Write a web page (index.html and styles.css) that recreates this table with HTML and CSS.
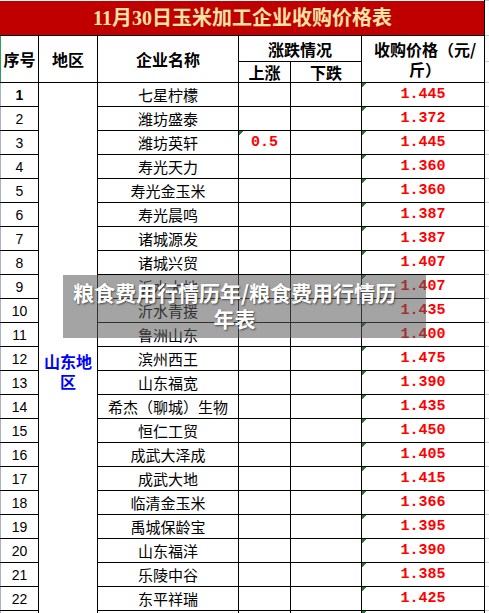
FILE: index.html
```html
<!DOCTYPE html>
<html lang="zh-CN">
<head>
<meta charset="utf-8">
<title>11月30日玉米加工企业收购价格表</title>
<link rel="stylesheet" href="styles.css">
</head>
<body>
<table class="sheet">
  <colgroup>
    <col class="c-no"><col class="c-area"><col class="c-name"><col class="c-up"><col class="c-down"><col class="c-price"><col class="c-gut">
  </colgroup>
  <tr class="r-title">
    <td class="title" colspan="6">11月30日玉米加工企业收购价格表</td>
    <td class="gut"></td>
  </tr>
  <tr class="r-h1">
    <td class="hd first-h" rowspan="2">序号</td>
    <td class="hd" rowspan="2">地区</td>
    <td class="hd" rowspan="2">企业名称</td>
    <td class="hd" colspan="2">涨跌情况</td>
    <td class="hd price-h" rowspan="2">收购价格（元/斤）</td>
    <td class="gut"></td>
  </tr>
  <tr class="r-h2">
    <td class="hd">上涨</td>
    <td class="hd">下跌</td>
    <td class="gut"></td>
  </tr>
  <tr class="row"><td class="no bold">1</td><td class="area" rowspan="24">山东地区</td><td class="name">七星柠檬</td><td></td><td></td><td class="price tri">1.445</td><td class="gut"></td></tr>
  <tr class="row"><td class="no">2</td><td class="name">潍坊盛泰</td><td></td><td></td><td class="price tri">1.372</td><td class="gut"></td></tr>
  <tr class="row"><td class="no">3</td><td class="name">潍坊英轩</td><td class="chg tri">0.5</td><td></td><td class="price tri">1.445</td><td class="gut"></td></tr>
  <tr class="row"><td class="no">4</td><td class="name">寿光天力</td><td></td><td></td><td class="price tri">1.360</td><td class="gut"></td></tr>
  <tr class="row"><td class="no">5</td><td class="name">寿光金玉米</td><td></td><td></td><td class="price tri">1.360</td><td class="gut"></td></tr>
  <tr class="row"><td class="no">6</td><td class="name">寿光晨鸣</td><td></td><td></td><td class="price tri">1.387</td><td class="gut"></td></tr>
  <tr class="row"><td class="no">7</td><td class="name">诸城源发</td><td></td><td></td><td class="price tri">1.387</td><td class="gut"></td></tr>
  <tr class="row"><td class="no">8</td><td class="name">诸城兴贸</td><td></td><td></td><td class="price tri">1.407</td><td class="gut"></td></tr>
  <tr class="row"><td class="no">9</td><td class="name">沂水大地</td><td></td><td></td><td class="price tri">1.407</td><td class="gut"></td></tr>
  <tr class="row"><td class="no">10</td><td class="name">沂水青援</td><td></td><td></td><td class="price tri">1.435</td><td class="gut"></td></tr>
  <tr class="row"><td class="no">11</td><td class="name">鲁洲山东</td><td></td><td></td><td class="price tri">1.400</td><td class="gut"></td></tr>
  <tr class="row"><td class="no">12</td><td class="name">滨州西王</td><td></td><td></td><td class="price tri">1.475</td><td class="gut"></td></tr>
  <tr class="row"><td class="no">13</td><td class="name">山东福宽</td><td></td><td></td><td class="price tri">1.390</td><td class="gut"></td></tr>
  <tr class="row"><td class="no">14</td><td class="name">希杰（聊城）生物</td><td></td><td></td><td class="price tri">1.435</td><td class="gut"></td></tr>
  <tr class="row"><td class="no">15</td><td class="name">恒仁工贸</td><td></td><td></td><td class="price tri">1.450</td><td class="gut"></td></tr>
  <tr class="row"><td class="no">16</td><td class="name">成武大泽成</td><td></td><td></td><td class="price tri">1.405</td><td class="gut"></td></tr>
  <tr class="row"><td class="no">17</td><td class="name">成武大地</td><td></td><td></td><td class="price tri">1.415</td><td class="gut"></td></tr>
  <tr class="row"><td class="no">18</td><td class="name">临清金玉米</td><td></td><td></td><td class="price tri">1.366</td><td class="gut"></td></tr>
  <tr class="row"><td class="no">19</td><td class="name">禹城保龄宝</td><td></td><td></td><td class="price tri">1.395</td><td class="gut"></td></tr>
  <tr class="row"><td class="no">20</td><td class="name">山东福洋</td><td></td><td></td><td class="price tri">1.390</td><td class="gut"></td></tr>
  <tr class="row"><td class="no">21</td><td class="name">乐陵中谷</td><td></td><td></td><td class="price tri">1.385</td><td class="gut"></td></tr>
  <tr class="row"><td class="no">22</td><td class="name">东平祥瑞</td><td></td><td></td><td class="price tri">1.425</td><td class="gut"></td></tr>
  <tr class="row"><td class="no"></td><td class="name"></td><td></td><td></td><td class="price tri"></td><td class="gut"></td></tr>
  <tr class="row"><td class="no"></td><td class="name"></td><td></td><td></td><td class="price tri"></td><td class="gut"></td></tr>
</table>
<div class="watermark">粮食费用行情历年/粮食费用行情历年表</div>
</body>
</html>
```
FILE: styles.css
```css
html, body {
  margin: 0;
  padding: 0;
  background: #ffffff;
}
body {
  width: 489px;
  height: 613px;
  overflow: hidden;
  position: relative;
  font-family: "Noto Sans CJK SC", sans-serif;
  color: #000000;
}
.sheet {
  border-collapse: collapse;
  table-layout: fixed;
  width: 489px;
}
.c-no { width: 38px; }
.c-area { width: 59px; }
.c-name { width: 141px; }
.c-up { width: 52px; }
.c-down { width: 71px; }
.c-price { width: 123px; }
.c-gut { width: 5px; }

.sheet td {
  border: 1px solid #000000;
  padding: 0;
  text-align: center;
  vertical-align: middle;
  white-space: nowrap;
}
.r-title { height: 35px; }
.r-h1 { height: 26px; }
.r-h2 { height: 20px; }
.row { height: 24px; }

.sheet td.title {
  background: #c00000;
  color: #fbe3a6;
  font-family: "Liberation Serif", "Noto Sans CJK SC", serif;
  font-weight: 700;
  font-size: 20px;
  line-height: 24px;
  border-left: 1px solid #c00000;
  border-top: none;
}
.sheet td.hd {
  font-weight: 700;
  font-size: 16px;
  line-height: 20px;
}
.sheet td.first-h {
  border-left: 1px solid #2ca05a;
}
.sheet td.price-h {
  white-space: normal;
  padding: 0 2px 0 6px;
}
.sheet td.no {
  font-family: "Liberation Sans", sans-serif;
  font-size: 14px;
  border-left: 1px solid #a9b1ca;
}
.sheet td.no.bold { font-weight: 700; }
.sheet td.area {
  white-space: normal;
  color: #0000ff;
  font-weight: 700;
  font-size: 16px;
  line-height: 20px;
  padding: 0 4px;
  vertical-align: middle;
}
.sheet td.name {
  font-size: 15px;
  line-height: 20px;
}
.sheet td.price,
.sheet td.chg {
  font-family: "Liberation Mono", monospace;
  color: #ff0000;
  font-size: 15px;
  line-height: 20px;
  font-weight: 700;
}
.sheet td.tri {
  background-image: linear-gradient(135deg, #1a7f2e 0 3px, transparent 3px);
  background-size: 6px 6px;
  background-repeat: no-repeat;
  background-position: left top;
}
.sheet td.gut {
  border-left: none;
  border-right: none;
  border-top: 1px solid #c6cce0;
  border-bottom: 1px solid #c6cce0;
}

.watermark {
  position: absolute;
  left: 63px;
  top: 275px;
  width: 363px;
  height: 63px;
  box-sizing: border-box;
  padding: 4px 26px 7px 6px;
  background: rgba(90, 90, 90, 0.55);
  color: #ffffff;
  font-family: "Noto Sans CJK SC", sans-serif;
  font-weight: 700;
  font-size: 21px;
  line-height: 26px;
  text-align: center;
  text-shadow: 1px 1px 2px rgba(0, 0, 0, 0.55);
}
```
